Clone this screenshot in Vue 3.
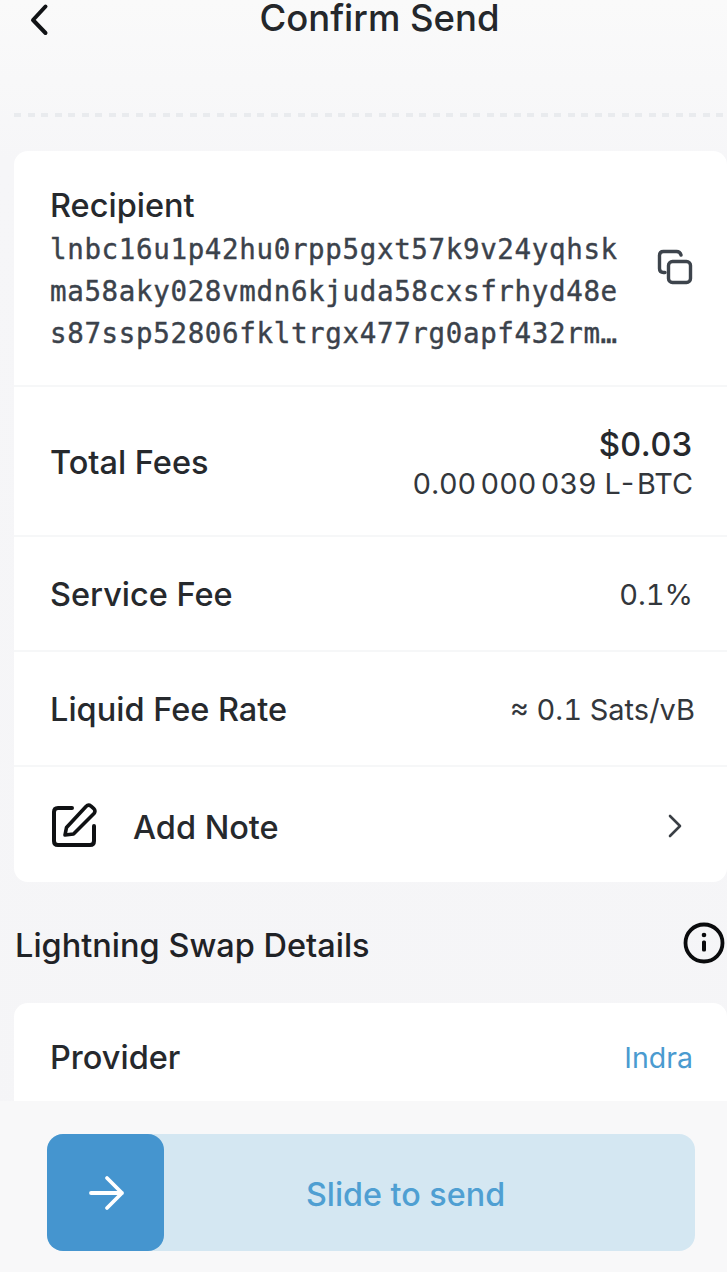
<script setup>
const address = [
  'lnbc16u1p42hu0rpp5gxt57k9v24yqhsk',
  'ma58aky028vmdn6kjuda58cxsfrhyd48e',
  's87ssp52806fkltrgx477rg0apf432rm…',
]
</script>

<template>
  <div class="page">
    <header class="top">
      <button class="back" aria-label="Back">
        <svg width="24" height="34" viewBox="0 0 24 34" fill="none">
          <path d="M17.500 4.500 5 18l12.500 13" stroke="#111316" stroke-width="4" stroke-linecap="round" stroke-linejoin="round" />
        </svg>
      </button>
      <h1>Confirm Send</h1>
    </header>
    <div class="dashes"></div>

    <section class="card main">
      <div class="row recipient">
        <div class="rec-text">
          <div class="label">Recipient</div>
          <div class="addr">
            <div v-for="line in address" :key="line">{{ line }}</div>
          </div>
        </div>
        <svg class="copy" width="38" height="38" viewBox="0 0 38 38" fill="none">
          <rect x="11.500" y="12.500" width="22" height="21" rx="4" stroke="#3d444c" stroke-width="3.400" />
          <path d="M8 23.500H6.500C4 23.500 2.500 22 2.500 19.500V6.500C2.500 4 4 2.500 6.500 2.500H19.500C21.500 2.500 23.500 4 24 6" stroke="#3d444c" stroke-width="3.400" stroke-linecap="round" />
        </svg>
      </div>
      <div class="row fees">
        <div class="label">Total Fees</div>
        <div class="fee-val">
          <div class="usd">$0.03</div>
          <div class="btc"><span class="btc-num">0.00 000 039</span> L-BTC</div>
        </div>
      </div>
      <div class="row service">
        <div class="label">Service Fee</div>
        <div class="val">0.1%</div>
      </div>
      <div class="row rate">
        <div class="label">Liquid Fee Rate</div>
        <div class="val">≈ 0.1 Sats/vB</div>
      </div>
      <div class="row note">
        <svg class="pen" width="48" height="48" viewBox="0 0 48 48" fill="none">
          <path d="M21 6H7C4.500 6 3 7.500 3 10V39C3 41.500 4.500 43 7 43H39C41.500 43 43 41.500 43 39V24" stroke="#0f1113" stroke-width="4" stroke-linecap="round" />
          <path d="M14 33 15.500 25.500 35 4.500C36.500 3 38.500 3 40 4.200L42.800 6.700C44.300 8 44.300 10 43 11.500L22.500 32Z" stroke="#0f1113" stroke-width="3.600" stroke-linejoin="round" />
        </svg>
        <div class="label note-label">Add Note</div>
        <svg class="chev" width="16" height="26" viewBox="0 0 16 26" fill="none">
          <path d="M3 3 13 13 3 23" stroke="#3a3f45" stroke-width="2.600" stroke-linecap="round" stroke-linejoin="round" />
        </svg>
      </div>
    </section>

    <div class="section-head">
      <h2>Lightning Swap Details</h2>
      <svg class="info" width="42" height="42" viewBox="0 0 42 42" fill="none">
        <circle cx="21" cy="21" r="18.500" stroke="#0a0b0d" stroke-width="3.800" />
        <circle cx="21" cy="13" r="2.300" fill="#0a0b0d" />
        <rect x="19" y="18.500" width="4" height="11" rx="1.500" fill="#0a0b0d" />
      </svg>
    </div>

    <section class="card provider">
      <div class="label">Provider</div>
      <div class="link">Indra</div>
    </section>

    <footer class="foot">
      <div class="slider">
        <div class="thumb">
          <svg width="38" height="38" viewBox="0 0 38 38" fill="none">
            <path d="M4 19H35M20 4 35 19 20 34" stroke="#fff" stroke-width="3.800" stroke-linecap="round" stroke-linejoin="round" />
          </svg>
        </div>
        <div class="slide-text">Slide to send</div>
      </div>
    </footer>
  </div>
</template>

<style>
html, body { margin: 0; padding: 0; background: #f6f6f8; }
</style>

<style scoped>
.page {
  width: 727px;
  height: 1272px;
  overflow: hidden;
  display: flex;
  flex-direction: column;
  font-family: Inter, "Liberation Sans", sans-serif;
  color: #1f2226;
  background: linear-gradient(180deg, #fafafa 0, #f6f6f8 160px, #f5f5f7 100%);
}
.top {
  position: relative;
  height: 37px;
  padding-left: 32px;
  display: flex;
  justify-content: center;
  align-items: center;
  flex: none;
}
.back {
  position: absolute;
  left: 28px;
  top: 2px;
  padding: 0;
  border: 0;
  background: none;
  display: flex;
}
h1 {
  margin: 0;
  font-size: 36.500px;
  font-weight: 500;
  line-height: 37px;
  color: #24272b;
}
.dashes {
  flex: none;
  height: 4px;
  margin: 76px 0 0 14px;
  background: repeating-linear-gradient(90deg, #e9ebee 0 7px, transparent 7px 13.500px);
}
.card {
  background: #fff;
  flex: none;
  margin-left: 14px;
  border-radius: 14px;
}
.main {
  margin-top: 34px;
  width: 713px;
}
.row {
  display: flex;
  align-items: center;
  padding: 0 34px 0 36px;
  box-sizing: border-box;
  justify-content: space-between;
  border-bottom: 2px solid #f6f7f8;
}
.label {
  font-size: 32.500px;
  font-weight: 500;
  line-height: 38px;
  color: #26292d;
}
.recipient { height: 236px; align-items: flex-start; padding-top: 36px; }
.addr {
  margin-top: 3px;
  margin-left: 0;
  font-family: "DejaVu Sans Mono", monospace;
  font-size: 27.500px;
  line-height: 42px;
  letter-spacing: 0.650px;
  color: #3b424b;
  -webkit-text-stroke: 0.4px #3b424b;
  white-space: nowrap;
}
.copy { margin-top: 62px; margin-right: -2px; }
.fees { height: 150px; padding-top: 3px; }
.fee-val { text-align: right; margin-top: 5px; }
.usd { font-size: 33px; font-weight: 500; line-height: 38px; color: #26292d; font-variant-numeric: tabular-nums; }
.btc {
  font-size: 28.800px;
  line-height: 42px;
  color: #33373c;
  font-variant-numeric: tabular-nums;
}
.btc-num { word-spacing: -3.500px; }
.service, .rate { height: 115px; padding-top: 2px; }
.val { font-size: 29px; color: #33373c; font-variant-numeric: tabular-nums; }
.rate .val { margin-right: -2px; }
.note { height: 115px; border-bottom: 0; padding-top: 7px; }
.pen { margin-left: 1px; margin-top: -5px; }
.note-label { margin-left: 34px; flex: 1; }
.chev { margin-right: 10px; margin-top: -5px; }
.section-head {
  flex: none;
  height: 121px;
  margin-left: 15px;
  padding: 6px 2px 0 0;
  box-sizing: border-box;
  display: flex;
  align-items: center;
  justify-content: space-between;
}
.info { margin-top: -6px; }
h2 {
  margin: 0;
  font-size: 32.500px;
  font-weight: 500;
  color: #1f2226;
}
.provider {
  height: 98px;
  width: 713px;
  box-sizing: border-box;
  padding: 12px 34px 0 36px;
  display: flex;
  align-items: center;
  justify-content: space-between;
  border-radius: 14px 14px 0 0;
}
.link { font-size: 28.500px; color: #4a9bd0; margin-top: -2px; }
.foot {
  flex: 1;
  background: #f8f8f9;
  padding: 33px 32px 0 47px;
}
.slider {
  height: 117px;
  background: #d4e7f2;
  border-radius: 16px;
  display: flex;
  align-items: center;
}
.thumb {
  width: 117px;
  height: 117px;
  border-radius: 16px;
  background: #4595cf;
  display: flex;
  align-items: center;
  justify-content: center;
  flex: none;
}
.slide-text {
  flex: 1;
  text-align: center;
  font-size: 32.300px;
  font-weight: 500;
  color: #4f9fd2;
  padding-top: 3px;
  margin-right: 48px;
}
</style>
